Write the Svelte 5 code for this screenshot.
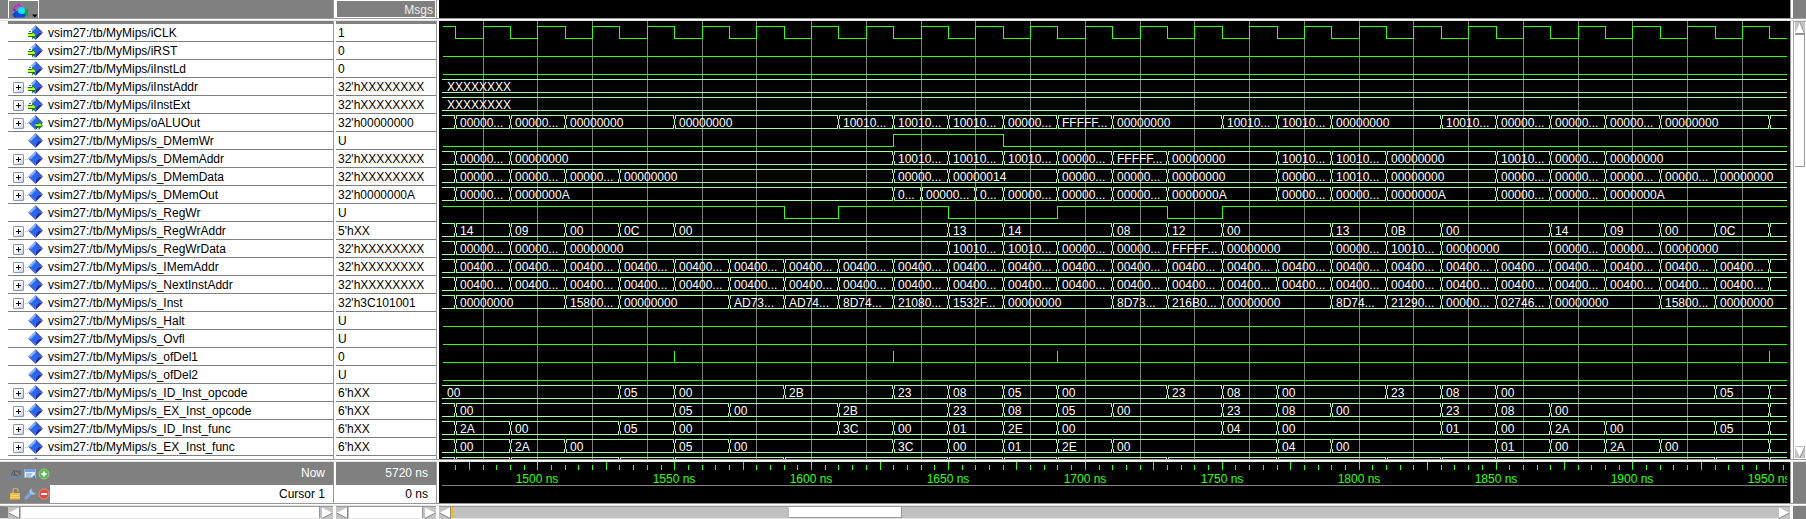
<script>
  const ORIGIN = 95.3;
  const SCALE = 2.7378;
  const END = 1950;
  const FAR = 6000;
  const x = (t) => Math.round(ORIGIN + (t - 1500) * SCALE);

  const range = (from, to, step) => {
    const out = [];
    for (let t = from; t <= to; t += step) out.push(t);
    return out;
  };

  // "time text" pairs separated by commas; a trailing ~ means the value is elided
  const bus = (spec) =>
    spec.split(',').map((part) => {
      const [t, text = ''] = part.trim().split(' ');
      return { t: t === '-' ? null : +t, text: text.replace('~', '...') };
    });

  const every = (text) => range(1470, 1930, 20).map((t) => `${t} ${text}`).join(',') + ',1950';
  const clockEdges = range(1470, END, 10);

  const prefix = 'vsim27:/tb/MyMips/';
  const signals = [
    { name: 'iCLK', value: '1', port: 'in', start: 1, edges: clockEdges },
    { name: 'iRST', value: '0', port: 'in', start: 0, edges: [] },
    { name: 'iInstLd', value: '0', port: 'in', start: 0, edges: [] },
    { name: 'iInstAddr', value: "32'hXXXXXXXX", port: 'in', bus: bus('- XXXXXXXX') },
    { name: 'iInstExt', value: "32'hXXXXXXXX", port: 'in', bus: bus('- XXXXXXXX') },
    { name: 'oALUOut', value: "32'h00000000", port: 'out', bus: bus('1470 00000~,1490 00000~,1510 00000000,1550 00000000,1610 10010~,1630 10010~,1650 10010~,1670 00000~,1690 FFFFF~,1710 00000000,1750 10010~,1770 10010~,1790 00000000,1830 10010~,1850 00000~,1870 00000~,1890 00000~,1910 00000000,1950') },
    { name: 's_DMemWr', value: 'U', start: 0, edges: [1630, 1670] },
    { name: 's_DMemAddr', value: "32'hXXXXXXXX", bus: bus('1470 00000~,1490 00000000,1630 10010~,1650 10010~,1670 10010~,1690 00000~,1710 FFFFF~,1730 00000000,1770 10010~,1790 10010~,1810 00000000,1850 10010~,1870 00000~,1890 00000000') },
    { name: 's_DMemData', value: "32'hXXXXXXXX", bus: bus('1470 00000~,1490 00000~,1510 00000~,1530 00000000,1630 00000~,1650 00000014,1690 00000~,1710 00000~,1730 00000000,1770 00000~,1790 10010~,1810 00000000,1850 00000~,1870 00000~,1890 00000~,1910 00000~,1930 00000000') },
    { name: 's_DMemOut', value: "32'h0000000A", bus: bus('1470 00000~,1490 0000000A,1630 0~,1640 00000~,1660 0~,1670 00000~,1690 00000~,1710 00000~,1730 0000000A,1770 00000~,1790 00000~,1810 0000000A,1850 00000~,1870 00000~,1890 0000000A') },
    { name: 's_RegWr', value: 'U', start: 1, edges: [1590, 1610, 1650, 1690, 1730, 1750] },
    { name: 's_RegWrAddr', value: "5'hXX", bus: bus('1470 14,1490 09,1510 00,1530 0C,1550 00,1650 13,1670 14,1710 08,1730 12,1750 00,1790 13,1810 0B,1830 00,1870 14,1890 09,1910 00,1930 0C,1950') },
    { name: 's_RegWrData', value: "32'hXXXXXXXX", bus: bus('1470 00000~,1490 00000~,1510 00000000,1650 10010~,1670 10010~,1690 00000~,1710 00000~,1730 FFFFF~,1750 00000000,1790 00000~,1810 10010~,1830 00000000,1870 00000~,1890 00000~,1910 00000000') },
    { name: 's_IMemAddr', value: "32'hXXXXXXXX", bus: bus(every('00400~')) },
    { name: 's_NextInstAddr', value: "32'hXXXXXXXX", bus: bus(every('00400~')) },
    { name: 's_Inst', value: "32'h3C101001", bus: bus('1470 00000000,1510 15800~,1530 00000000,1570 AD73~,1590 AD74~,1610 8D74~,1630 21080~,1650 1532F~,1670 00000000,1710 8D73~,1730 216B0~,1750 00000000,1790 8D74~,1810 21290~,1830 00000~,1850 02746~,1870 00000000,1910 15800~,1930 00000000') },
    { name: 's_Halt', value: 'U', start: 0, edges: [] },
    { name: 's_Ovfl', value: 'U', start: 0, edges: [] },
    { name: 's_ofDel1', value: '0', start: 0, edges: [1550, 1550, 1630, 1630, 1690, 1690, 1950, 1950] },
    { name: 's_ofDel2', value: 'U', start: 0, edges: [] },
    { name: 's_ID_Inst_opcode', value: "6'hXX", bus: bus('- 00,1530 05,1550 00,1590 2B,1630 23,1650 08,1670 05,1690 00,1730 23,1750 08,1770 00,1810 23,1830 08,1850 00,1930 05,1950') },
    { name: 's_EX_Inst_opcode', value: "6'hXX", bus: bus('1470 00,1550 05,1570 00,1610 2B,1650 23,1670 08,1690 05,1710 00,1750 23,1770 08,1790 00,1830 23,1850 08,1870 00,1950') },
    { name: 's_ID_Inst_func', value: "6'hXX", bus: bus('1470 2A,1490 00,1530 05,1550 00,1610 3C,1630 00,1650 01,1670 2E,1690 00,1750 04,1770 00,1830 01,1850 00,1870 2A,1890 00,1930 05,1950') },
    { name: 's_EX_Inst_func', value: "6'hXX", bus: bus('1470 00,1490 2A,1510 00,1550 05,1570 00,1630 3C,1650 00,1670 01,1690 2E,1710 00,1770 04,1790 00,1850 01,1870 00,1890 2A,1910 00,1950') }
  ];

  const nextBus = bus('1470,1490,1530,1550,1590,1650,1670,1690,1730,1770,1810,1830,1850,1930,1950');

  const busPath = (items) => {
    let top = 'M0 1.5H';
    let bottom = 'M0 14.5H';
    let marks = '';
    for (const { t } of items) {
      if (t === null) continue;
      const c = x(t);
      top += `${c}M${c + 1} 1.5H`;
      bottom += `${c}M${c + 1} 14.5H`;
      marks += `M${c - 0.5} 1V5M${c + 1.5} 1V5M${c + 0.5} 5V11M${c - 0.5} 11V15M${c + 1.5} 11V15`;
    }
    return `${top}${FAR}${bottom}${FAR}${marks}`;
  };

  const bitPath = (start, edges) => {
    let level = start;
    const y = () => (level ? 2.5 : 14.5);
    let d = `M1 ${y()}`;
    for (const t of edges) {
      d += `H${x(t) + 0.5}`;
      level = level ? 0 : 1;
      d += `V${y()}`;
    }
    return `${d}H${FAR}`;
  };

  const gridLines = range(1480, END, 20);
  const ticks = range(1470, 1955, 5);
  const labels = range(1500, END, 50);
</script>

{#snippet diamond(port)}
  <svg class="diamond" width="15" height="15" viewBox="0 0 15 15" aria-hidden="true">
    <path d="M7.500 0V7.500H0Z" fill="#86aef0" />
    <path d="M7.500 0L15 7.500H7.500Z" fill="#3a5cc8" />
    <path d="M0 7.500H7.500V15Z" fill="#3d68d8" />
    <path d="M15 7.500L7.500 15V7.500Z" fill="#2a2a9c" />
    <path d="M7.500 3.500L11.500 7.500 7.500 11.500 3.500 7.500Z" fill="#2468f8" />
    {#if port === 'in'}
      <path d="M0 5H4V8H0Z" fill="#fff" />
      <path d="M1 6H3V7H1Z" fill="#3a5cc8" />
      <path d="M0 8H4V6L8.500 10 4 14.500V12H0Z" fill="#128012" />
      <path d="M0 9H4.500V7.500L7.500 10 6.500 11H0Z" fill="#c8ff30" />
    {:else if port === 'out'}
      <path d="M7 8H10.500V5.500L15 10.500 10.500 15V12.500H7Z" fill="#128012" />
      <path d="M7.500 9H11.500V7.500L14 10.500 13 11H7.500Z" fill="#a8f030" />
    {/if}
  </svg>
{/snippet}

{#snippet arrow(dir)}
  <svg class="arrow" width="12" height="12" viewBox="0 0 12 12" aria-hidden="true">
    {#if dir === 'left'}
      <path d="M11 0.5V11L0.5 6Z" fill="#fff" /><path d="M11.5 0V11.5L0.5 6" fill="none" stroke="#8a8a8a" />
    {:else if dir === 'right'}
      <path d="M1 0.5V11L11.5 6Z" fill="#fff" /><path d="M1 11.5L11.5 6" fill="none" stroke="#8a8a8a" />
    {:else if dir === 'up'}
      <path d="M5 0.5L10 11H0Z" fill="#fff" /><path d="M5 0.5L9.5 11.5H0.5" fill="none" stroke="#8a8a8a" />
    {:else}
      <path d="M0 1H10L5 11Z" fill="#fff" /><path d="M10 0.5L5 11.5" fill="none" stroke="#8a8a8a" />
    {/if}
  </svg>
{/snippet}

<div class="viewer">
  <header class="name-head">
    <button class="objects" aria-label="Objects">
      <svg width="28" height="15" viewBox="0 0 28 15" aria-hidden="true">
        <path d="M2 6L7.500 1.500 10.500 4" stroke="#c828e8" stroke-width="2" fill="none" />
        <path d="M2 6.500L5 7.500" stroke="#8a1cb0" stroke-width="1.500" fill="none" />
        <path d="M12 6H17V13.500H11Z" fill="#14a43c" />
        <path d="M1.500 11.500L4 8.500 8 8 15 12 13 14.500H3Z" fill="#0848e0" />
        <circle cx="10.500" cy="7.500" r="3.500" fill="#10e0ff" />
        <path d="M21 11.500H26.500L23.800 14.500Z" fill="#000" />
      </svg>
    </button>
  </header>
  <div class="value-head">Msgs</div>
  <div class="wave-head"></div>
  <div class="corner"></div>

  <div class="hsash"></div>

  <ul class="names">
    {#each signals as s}
      <li>
        {#if s.bus}
          <button class="expand" aria-label={`Expand ${s.name}`}>
            <svg width="11" height="11" viewBox="0 0 11 11" aria-hidden="true"><path d="M3 5.500H8M5.500 3V8" stroke="#000" stroke-width="1" /></svg>
          </button>
        {/if}
        {@render diamond(s.port)}
        <span>{prefix}{s.name}</span>
      </li>
    {/each}
    <li>{@render diamond()}</li>
  </ul>
  <ul class="values">
    {#each signals as s}
      <li>{s.value}</li>
    {/each}
    <li></li>
  </ul>
  <div class="waves">
    <svg class="grid" aria-hidden="true">
      {#each gridLines as t}
        <path d={`M${x(t) + 0.5} 0V2000`} />
      {/each}
    </svg>
    {#each signals as s}
      <svg class="row">
        {#if s.bus}
          <path class="bus" d={busPath(s.bus)} />
          {#each s.bus as item}
            {#if item.text}
              <text x={item.t === null ? 5 : x(item.t) + 5} y="13">{item.text}</text>
            {/if}
          {/each}
        {:else}
          <path class="bit" d={bitPath(s.start, s.edges)} />
        {/if}
      </svg>
    {/each}
    <svg class="row"><path class="bus" d={busPath(nextBus)} /></svg>
  </div>
  <div class="vscroll">
    <button aria-label="Scroll up">{@render arrow('up')}</button>
    <div class="vthumb"></div>
    <div class="vrest"></div>
    <button aria-label="Scroll down">{@render arrow('down')}</button>
  </div>

  <div class="hsash"></div>

  <div class="cursor-names">
    <div class="now">
      <div class="tools">
        <svg width="12" height="12" viewBox="0 0 12 12" aria-hidden="true">
          <path d="M1 8L4 2 5 8M5 3H8L10 7V2M3 6L8 8" stroke="#555d66" fill="none" />
          <path d="M0 9.500H11M1 8V11M10 8V11" stroke="#5b8fd0" fill="none" />
        </svg>
        <svg width="12" height="12" viewBox="0 0 12 12" aria-hidden="true">
          <rect x="0.500" y="1.500" width="11" height="8" fill="#dfeaf8" stroke="#9bb4d4" />
          <rect x="1" y="1" width="10" height="3" fill="#6fa3e8" />
          <path d="M2 6H8M2 8H7" stroke="#7d9cc4" /><path d="M8 9L11 11V7Z" fill="#4f7fc0" />
        </svg>
        <svg width="12" height="12" viewBox="0 0 12 12" aria-hidden="true">
          <circle cx="6" cy="6" r="5" fill="#5cb84c" stroke="#8fd080" />
          <path d="M6 3.500V8.500M3.500 6H8.500" stroke="#fff" stroke-width="2" />
        </svg>
      </div>
      <span>Now</span>
    </div>
    <div class="cursor">
      <div class="tools">
        <svg width="12" height="12" viewBox="0 0 12 12" aria-hidden="true">
          <path d="M3 5V3A2.500 2.500 0 0 1 8 2.500V4" fill="none" stroke="#c8a868" stroke-width="1.500" />
          <rect x="0" y="5" width="10" height="6.500" fill="#f0b93c" /><path d="M1 7.500H9M1 9.500H9" stroke="#f9da88" />
        </svg>
        <svg width="12" height="12" viewBox="0 0 12 12" aria-hidden="true">
          <path d="M2 10L7.500 4.500" stroke="#7aa4e4" stroke-width="3" stroke-linecap="round" />
          <path d="M8 0.500A3.200 3.200 0 1 0 11.800 4.500L9.500 5 7.500 3Z" fill="#a8c4f0" />
        </svg>
        <svg width="12" height="12" viewBox="0 0 12 12" aria-hidden="true">
          <circle cx="6" cy="6" r="5" fill="#e2493c" stroke="#f08878" />
          <path d="M3 6H9" stroke="#fff" stroke-width="2" />
        </svg>
      </div>
      <span>Cursor 1</span>
    </div>
  </div>
  <div class="cursor-values">
    <div class="now">5720 ns</div>
    <div class="cursor">0 ns</div>
  </div>
  <div class="timeline">
    <svg class="ruler">
      {#each ticks as t}
        <path class="bit" d={`M${x(t) + 0.5} ${t % 25 === 0 ? 0 : 3}V8`} />
      {/each}
      {#each labels as t}
        <text x={x(t)} y="21" text-anchor="middle">{t} ns</text>
      {/each}
    </svg>
  </div>
  <div class="corner"></div>

  <div class="hsash"></div>

  <div class="hscroll name-scroll">
    <button aria-label="Scroll names left">{@render arrow('left')}</button>
    <div class="full"></div>
    <button aria-label="Scroll names right">{@render arrow('right')}</button>
  </div>
  <div class="hscroll">
    <button aria-label="Scroll values left">{@render arrow('left')}</button>
    <div class="full"></div>
    <button aria-label="Scroll values right">{@render arrow('right')}</button>
  </div>
  <div class="hscroll wave-scroll">
    <button aria-label="Scroll waves left">{@render arrow('left')}</button>
    <div class="before"></div>
    <div class="thumb"></div>
    <div class="after"></div>
    <button aria-label="Scroll waves right">{@render arrow('right')}</button>
  </div>
  <div class="corner"></div>
</div>

<style>
  :global(body) {
    background: #fff;
  }
  .viewer {
    display: grid;
    grid-template-columns: 333px 100px minmax(0, 1fr) 13px;
    grid-template-rows: 18px 3px minmax(0, 1fr) 3px 41px 3px 13px;
    column-gap: 3px;
    height: 100vh;
    box-sizing: border-box;
    overflow: hidden;
    background: #fff;
    font: 12px/18px "Liberation Sans", Arial, sans-serif;
    color: #000;
  }
  button {
    display: block;
    padding: 0;
    border: 0;
    background: none;
  }
  svg {
    display: block;
  }
  ul {
    list-style: none;
    margin: 0;
    padding: 0;
  }
  .name-head,
  .corner {
    background: #808080;
  }
  .name-head,
  .names,
  .cursor-names,
  .name-scroll,
  .values,
  .value-head,
  .cursor-values {
    box-shadow: 1px 0 #999;
  }
  .waves,
  .wave-head,
  .timeline {
    background: #000;
    box-shadow: 1px 0 #999;
  }
  .objects {
    box-sizing: border-box;
    width: 31px;
    height: 18px;
    margin-left: 8px;
    padding: 2px 0 0 2px;
    border: 1px solid #fff;
    border-bottom: 0;
  }
  .value-head {
    box-sizing: border-box;
    padding-right: 2px;
    border: 1px solid #fff;
    background: #808080;
    color: #f0f0f0;
    text-align: right;
  }
  .hsash {
    grid-column: 1 / -1;
    box-sizing: border-box;
    height: 3px;
    border-top: 1px solid #999;
    border-bottom: 1px solid #e4e4e4;
    background: #fff;
  }
  .names,
  .values {
    overflow: hidden;
  }
  .names {
    padding-left: 8px;
  }
  .names::before,
  .values::before {
    content: '';
    display: block;
    height: 3px;
    background: #808080;
  }
  li {
    display: flex;
    align-items: center;
    box-sizing: border-box;
    height: 18px;
    border-bottom: 1px solid #808080;
    white-space: nowrap;
  }
  .names li {
    position: relative;
    padding-left: 20px;
  }
  .values li {
    padding-left: 2px;
  }
  .diamond {
    margin-right: 5px;
  }
  .expand {
    position: absolute;
    left: 5px;
    top: 4px;
    box-sizing: border-box;
    width: 11px;
    height: 11px;
    border: 1px solid #8795b0;
    border-radius: 1px;
    background: linear-gradient(135deg, #fff 40%, #c4cde0);
  }
  .expand svg {
    margin: -1px;
  }
  .expand::after {
    content: '';
    position: absolute;
    left: 11px;
    top: 4px;
    width: 3px;
    border-top: 1px dotted #bbb;
  }
  .waves {
    position: relative;
    padding: 3px 3px 0;
    overflow: hidden;
  }
  .grid {
    position: absolute;
    top: 0;
    left: 3px;
    width: 100%;
    height: 100%;
  }
  .grid path {
    stroke: #808080;
  }
  .row {
    position: relative;
    width: 100%;
    height: 18px;
    overflow: hidden;
  }
  path.bus,
  path.bit {
    fill: none;
    stroke: #a8ffa8;
    shape-rendering: crispEdges;
  }
  path.bit {
    stroke: #32ff14;
  }
  .row text {
    fill: #fff;
  }
  .vscroll {
    display: flex;
    flex-direction: column;
    padding: 0 0 1px 1px;
    background: #fff;
    border-left: 1px solid #aaa;
    border-top: 1px solid #aaa;
    box-sizing: border-box;
  }
  .vscroll button,
  .hscroll button {
    flex: none;
    background: #c4c4c4;
    width: 12px;
    height: 12px;
  }
  .vscroll button {
    width: 10px;
    overflow: hidden;
  }
  .vthumb,
  .vrest {
    width: 10px;
    box-sizing: border-box;
  }
  .vthumb {
    flex: 132;
    border: solid #999;
    border-width: 1px 1px 1px 0;
  }
  .vrest {
    flex: 280;
  }
  .cursor-names .now,
  .cursor-names .cursor {
    display: flex;
    align-items: center;
    justify-content: space-between;
  }
  .now {
    box-sizing: border-box;
    height: 23px;
    padding-right: 8px;
    background: #808080;
    color: #fff;
    line-height: 23px;
  }
  .cursor {
    box-sizing: border-box;
    height: 18px;
    padding-right: 8px;
    background: #fff;
  }
  .cursor-values {
    text-align: right;
  }
  .tools {
    display: flex;
    align-items: center;
    gap: 2px;
    box-sizing: border-box;
    width: 50px;
    height: 100%;
    padding-left: 10px;
    background: #808080;
  }
  .timeline {
    padding: 0 3px;
  }
  .ruler {
    width: 100%;
    height: 23px;
    border-bottom: 1px solid #808080;
    overflow: hidden;
  }
  .ruler text {
    fill: #32ff14;
  }
  .hscroll {
    display: flex;
    box-sizing: border-box;
    height: 12px;
    border-top: 1px solid #999;
    background: #c0c0c0;
    box-shadow: 0 1px #e4e4e4;
  }
  .name-scroll {
    border-left: 8px solid #808080;
  }
  .hscroll .full {
    flex: 1;
    margin: 0 1px;
    border-right: 1px solid #999;
    background: #fff;
  }
  .before {
    flex: 337;
    box-sizing: border-box;
    margin-left: 1px;
    border-left: 1px solid #f5b800;
  }
  .thumb {
    flex: 112;
    border: solid #999;
    border-width: 0 1px 1px 0;
    background: #fff;
  }
  .after {
    flex: 877;
  }
</style>
